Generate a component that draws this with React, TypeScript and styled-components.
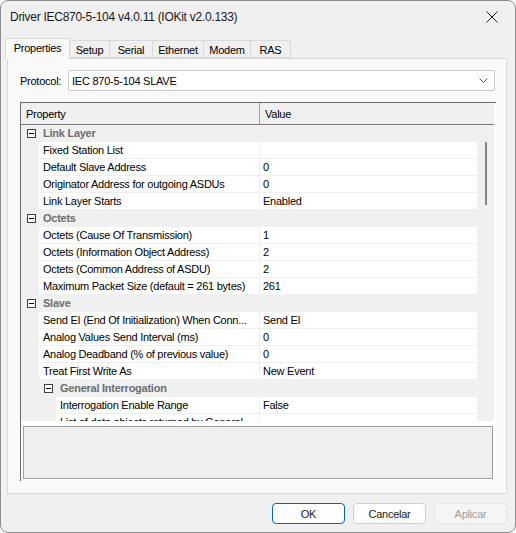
import styled, { createGlobalStyle } from "styled-components";

const GlobalStyle = createGlobalStyle`
  html, body {
    margin: 0;
    padding: 0;
    background: #ffffff;
  }
  #root {
    width: 516px;
    height: 533px;
  }
  * {
    box-sizing: border-box;
  }
`;

const Window = styled.div`
  width: 516px;
  height: 533px;
  border: 1px solid #8c8c8c;
  border-radius: 8px;
  background: #f0f0f0;
  display: flex;
  flex-direction: column;
  overflow: hidden;
  font-family: "Liberation Sans", Arial, sans-serif;
  font-size: 11px;
  letter-spacing: -0.25px;
  color: #000;
`;

const TitleBar = styled.div`
  height: 30px;
  display: flex;
  align-items: center;
  justify-content: space-between;
  padding-left: 9px;
`;

const Title = styled.span`
  font-size: 12px;
  letter-spacing: -0.27px;
  color: #1a1a1a;
  margin-top: 1px;
`;

const CloseButton = styled.div`
  width: 46px;
  height: 30px;
  display: flex;
  align-items: center;
  justify-content: center;
  margin-top: 1px;
`;

const Body = styled.div`
  padding: 7px 8px 0 6px;
  display: flex;
  flex-direction: column;
`;

const TabStrip = styled.div`
  display: flex;
  align-items: flex-end;
  height: 20px;
  margin-left: -2px;
  position: relative;
  z-index: 1;
`;

const Tab = styled.div<{ $active?: boolean; $w: number }>`
  width: ${(p) => p.$w}px;
  height: ${(p) => (p.$active ? 21 : 18)}px;
  margin-bottom: ${(p) => (p.$active ? -1 : 0)}px;
  background: ${(p) => (p.$active ? "#f9f9f9" : "#f0f0f0")};
  border: 1px solid #d9d9d9;
  border-bottom: ${(p) => (p.$active ? "none" : "1px solid #d9d9d9")};
  margin-left: -1px;
  display: flex;
  align-items: center;
  justify-content: center;
  padding-bottom: ${(p) => (p.$active ? 2 : 0)}px;
  padding-top: ${(p) => (p.$active ? 0 : 1)}px;
  &:first-child {
    margin-left: 0;
  }
`;

const TabPanel = styled.div`
  height: 436px;
  width: 500px;
  background: #f9f9f9;
  border: 1px solid #d9d9d9;
  padding: 11px 0 0 12px;
  display: flex;
  flex-direction: column;
`;

const ProtocolRow = styled.div`
  display: flex;
  align-items: center;
  height: 21px;
`;

const Label = styled.span`
  width: 48px;
`;

const Combo = styled.div`
  width: 427px;
  height: 21px;
  background: #ffffff;
  border: 1px solid #cccccc;
  border-radius: 2px;
  display: flex;
  align-items: center;
  justify-content: space-between;
  padding: 0 6px 0 3px;
`;

const GridFrame = styled.div`
  margin-top: 11px;
  width: 476px;
  height: 379px;
  background: #ffffff;
  border-top: 1px solid #6b6b6b;
  border-left: 1px solid #6b6b6b;
  display: flex;
  flex-direction: column;
`;

const GridHeader = styled.div`
  width: 473px;
  height: 22px;
  background: #f0f0f0;
  border-bottom: 1px solid #7a7a7a;
  display: flex;
  align-items: stretch;
`;

const HeaderCell = styled.div<{ $w: number }>`
  width: ${(p) => p.$w}px;
  display: flex;
  align-items: center;
  padding-left: 5px;
  & + & {
    border-left: 1px solid #a0a0a0;
  }
`;

const GridBody = styled.div`
  width: 473px;
  height: 296px;
  display: flex;
  overflow: hidden;
`;

const Rows = styled.div`
  width: 456px;
  display: flex;
  flex-direction: column;
`;

const Row = styled.div`
  height: 17px;
  flex: none;
  display: flex;
  border-bottom: 1px solid #f0f0f0;
  background: #f0f0f0;
`;

const CategoryRow = styled(Row)<{ $level: number }>`
  align-items: center;
  padding-left: ${(p) => 6 + p.$level * 17}px;
`;

const Toggle = styled.span`
  width: 9px;
  height: 9px;
  border: 1px solid #404040;
  background: #ffffff;
  display: flex;
  align-items: center;
  justify-content: center;
  margin-right: 7px;
  &::after {
    content: "";
    width: 5px;
    height: 1px;
    background: #000;
  }
`;

const CategoryName = styled.span`
  font-weight: bold;
  color: #6d6d6d;
`;

const NameCell = styled.div<{ $level: number }>`
  margin-left: ${(p) => 18 + p.$level * 17}px;
  width: ${(p) => 220 - p.$level * 17}px;
  background: #ffffff;
  padding-left: 4px;
  display: flex;
  align-items: center;
  white-space: nowrap;
  overflow: hidden;
`;

const ValueCell = styled.div`
  margin-left: 1px;
  width: 217px;
  background: #ffffff;
  padding-left: 3px;
  display: flex;
  align-items: center;
`;

const ScrollTrack = styled.div`
  width: 17px;
  background: #f0f0f0;
  padding: 17px 0 0 8px;
`;

const ScrollThumb = styled.div`
  width: 2px;
  height: 63px;
  background: #858585;
`;

const DescBox = styled.div`
  margin: 5px 0 0 2px;
  width: 470px;
  height: 53px;
  background: #efefef;
  border: 1px solid #a0a0a0;
`;

const Footer = styled.div`
  display: flex;
  justify-content: flex-end;
  gap: 8px;
  padding: 9px 8px 0 0;
`;

const Button = styled.div<{ $variant?: "default" | "normal" | "disabled" }>`
  width: 73px;
  height: 21px;
  border-radius: 4px;
  display: flex;
  align-items: center;
  justify-content: center;
  background: ${(p) => (p.$variant === "disabled" ? "#f5f5f5" : "#fdfdfd")};
  color: ${(p) => (p.$variant === "disabled" ? "#a0a0a0" : "#1a1a1a")};
  border: 1px solid
    ${(p) =>
      p.$variant === "default"
        ? "#0067c0"
        : p.$variant === "disabled"
        ? "#e6e6e6"
        : "#cfcfcf"};
`;

type Item =
  | { kind: "cat"; name: string; level: number }
  | { kind: "prop"; name: string; value: string; level: number };

const items: Item[] = [
  { kind: "cat", name: "Link Layer", level: 0 },
  { kind: "prop", name: "Fixed Station List", value: "", level: 0 },
  { kind: "prop", name: "Default Slave Address", value: "0", level: 0 },
  { kind: "prop", name: "Originator Address for outgoing ASDUs", value: "0", level: 0 },
  { kind: "prop", name: "Link Layer Starts", value: "Enabled", level: 0 },
  { kind: "cat", name: "Octets", level: 0 },
  { kind: "prop", name: "Octets (Cause Of Transmission)", value: "1", level: 0 },
  { kind: "prop", name: "Octets (Information Object Address)", value: "2", level: 0 },
  { kind: "prop", name: "Octets (Common Address of ASDU)", value: "2", level: 0 },
  { kind: "prop", name: "Maximum Packet Size (default = 261 bytes)", value: "261", level: 0 },
  { kind: "cat", name: "Slave", level: 0 },
  { kind: "prop", name: "Send EI (End Of Initialization) When Conn...", value: "Send EI", level: 0 },
  { kind: "prop", name: "Analog Values Send Interval (ms)", value: "0", level: 0 },
  { kind: "prop", name: "Analog Deadband (% of previous value)", value: "0", level: 0 },
  { kind: "prop", name: "Treat First Write As", value: "New Event", level: 0 },
  { kind: "cat", name: "General Interrogation", level: 1 },
  { kind: "prop", name: "Interrogation Enable Range", value: "False", level: 1 },
  { kind: "prop", name: "List of data objects returned by General", value: "", level: 1 },
];

const tabs = [
  { label: "Properties", w: 65 },
  { label: "Setup", w: 41 },
  { label: "Serial", w: 44 },
  { label: "Ethernet", w: 52 },
  { label: "Modem", w: 48 },
  { label: "RAS", w: 41 },
];

export default function App() {
  return (
    <>
      <GlobalStyle />
      <Window>
        <TitleBar>
          <Title>Driver IEC870-5-104 v4.0.11 (IOKit v2.0.133)</Title>
          <CloseButton>
            <svg width="12" height="12" viewBox="0 0 12 12">
              <path d="M0.5 0.5 L11.5 11.5 M11.5 0.5 L0.5 11.5" stroke="#1a1a1a" strokeWidth="1" />
            </svg>
          </CloseButton>
        </TitleBar>
        <Body>
          <TabStrip>
            {tabs.map((t, i) => (
              <Tab key={t.label} $w={t.w} $active={i === 0}>
                {t.label}
              </Tab>
            ))}
          </TabStrip>
          <TabPanel>
            <ProtocolRow>
              <Label>Protocol:</Label>
              <Combo>
                <span>IEC 870-5-104 SLAVE</span>
                <svg width="9" height="5" viewBox="0 0 9 5">
                  <path d="M0.5 0.5 L4.5 4.5 L8.5 0.5" stroke="#555" strokeWidth="1" fill="none" />
                </svg>
              </Combo>
            </ProtocolRow>
            <GridFrame>
              <GridHeader>
                <HeaderCell $w={238}>Property</HeaderCell>
                <HeaderCell $w={218}>Value</HeaderCell>
              </GridHeader>
              <GridBody>
                <Rows>
                  {items.map((it, i) =>
                    it.kind === "cat" ? (
                      <CategoryRow key={i} $level={it.level}>
                        <Toggle />
                        <CategoryName>{it.name}</CategoryName>
                      </CategoryRow>
                    ) : (
                      <Row key={i}>
                        <NameCell $level={it.level}>{it.name}</NameCell>
                        <ValueCell>{it.value}</ValueCell>
                      </Row>
                    )
                  )}
                </Rows>
                <ScrollTrack>
                  <ScrollThumb />
                </ScrollTrack>
              </GridBody>
              <DescBox />
            </GridFrame>
          </TabPanel>
        </Body>
        <Footer>
          <Button $variant="default">OK</Button>
          <Button $variant="normal">Cancelar</Button>
          <Button $variant="disabled">Aplicar</Button>
        </Footer>
      </Window>
    </>
  );
}
